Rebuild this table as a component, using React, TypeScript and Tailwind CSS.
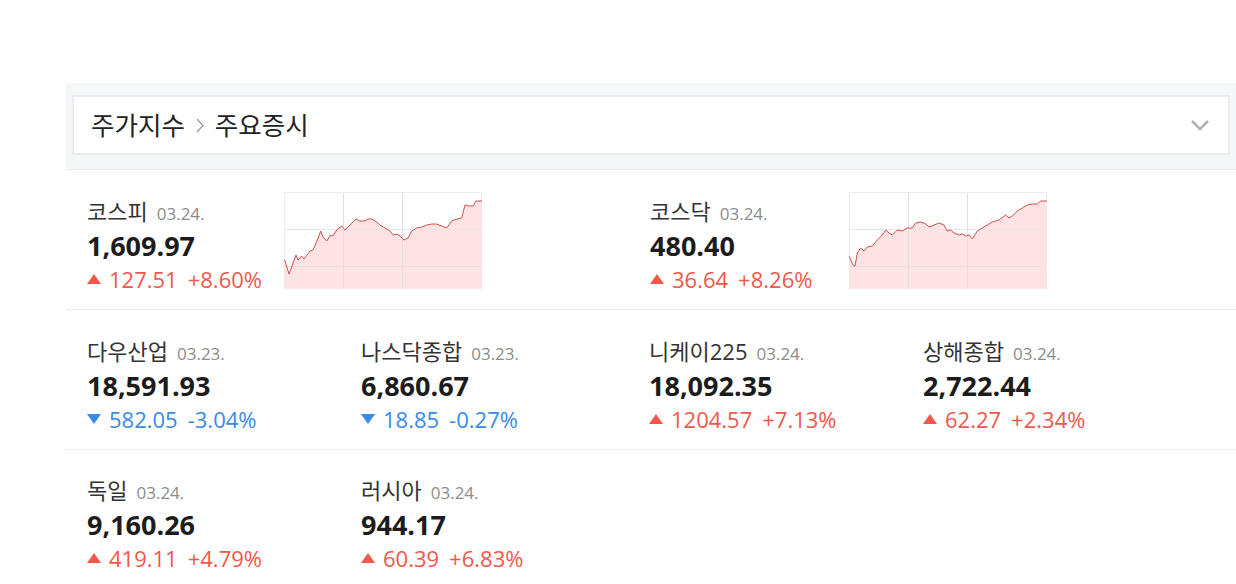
import React from "react";

type Market = {
  name: string;
  date: string;
  value: string;
  change: string;
  rate: string;
  up: boolean;
};

const kospiLine: [number, number][] = [
  [0, 68], [1, 69], [5, 82], [8, 74], [12, 63], [14, 68], [17.7, 64], [20, 67], [23, 63], [26, 59],
  [29, 58], [33, 49], [36.7, 39], [39, 45], [42.7, 49], [46.7, 43], [49, 44], [52.7, 38], [55, 36],
  [57.7, 34], [61, 38], [66, 33], [69, 30], [72, 27], [76, 29], [81, 29], [84, 27], [87.7, 27],
  [92.7, 30], [96, 33], [101, 36], [106, 39], [109, 43], [112.7, 42], [116, 44], [120, 48],
  [124, 46], [127.7, 39], [132.7, 36], [137.7, 35], [142.7, 33], [147.7, 32], [152.7, 32],
  [157.7, 34], [162.7, 36], [167.7, 29], [172.7, 27], [177.7, 26], [181, 13], [184, 14],
  [189, 14], [192, 9], [198, 9],
];

const kosdaqLine: [number, number][] = [
  [0, 64], [4, 73], [6, 74], [8.3, 61], [11.7, 56], [15, 59], [18.3, 55], [23.3, 54], [28.3, 48],
  [33.3, 43], [36.7, 38], [40, 41], [43.3, 43], [48.3, 38], [53.3, 39], [58.3, 36], [63.3, 36],
  [66.7, 31], [71.7, 30], [76.7, 32], [80, 35], [85, 33], [90, 31], [95, 33], [98.3, 39],
  [101.7, 38], [105, 41], [110, 43], [113.3, 42], [116.7, 44], [120, 43], [123.3, 47],
  [128.3, 39], [133.3, 36], [138.3, 33], [143.3, 30], [146.7, 29], [150, 28], [156.7, 23],
  [160, 26], [163.3, 24], [168.3, 19], [173.3, 16], [178.3, 13], [183.3, 12], [188.3, 12],
  [191.7, 9], [198, 9],
];

const row2: Market[] = [
  { name: "다우산업", date: "03.23.", value: "18,591.93", change: "582.05", rate: "-3.04%", up: false },
  { name: "나스닥종합", date: "03.23.", value: "6,860.67", change: "18.85", rate: "-0.27%", up: false },
  { name: "니케이225", date: "03.24.", value: "18,092.35", change: "1204.57", rate: "+7.13%", up: true },
  { name: "상해종합", date: "03.24.", value: "2,722.44", change: "62.27", rate: "+2.34%", up: true },
];

const row3: Market[] = [
  { name: "독일", date: "03.24.", value: "9,160.26", change: "419.11", rate: "+4.79%", up: true },
  { name: "러시아", date: "03.24.", value: "944.17", change: "60.39", rate: "+6.83%", up: true },
];

const font = "font-['Open_Sans','Noto_Sans_CJK_KR',sans-serif]";

const MiniChart = ({ points }: { points: [number, number][] }) => {
  const line = points.map(([x, y], i) => `${i ? "L" : "M"}${x} ${y}`).join(" ");
  const area = `${line} L198 97 L0 97 Z`;
  return (
    <svg width={198} height={97} viewBox="0 0 198 97" className="block">
      <rect x={0.5} y={0.5} width={197} height={96} fill="#fff" stroke="#ececec" />
      <path d={area} fill="#fde3e3" />
      <line x1={59.5} y1={1} x2={59.5} y2={97} stroke="#e6dede" />
      <line x1={118.5} y1={1} x2={118.5} y2={97} stroke="#e6dede" />
      <line x1={1} y1={37.5} x2={197} y2={37.5} stroke="#eee4e4" />
      <line x1={1} y1={74.5} x2={197} y2={74.5} stroke="#f3dada" />
      <path d={line} fill="none" stroke="#d0504c" strokeWidth={1} strokeLinejoin="round" />
    </svg>
  );
};

const Quote = ({ m }: { m: Market }) => {
  const color = m.up ? "text-[#f2574b]" : "text-[#3a8ae8]";
  return (
    <div className="flex flex-col">
      <div className="flex items-baseline h-[24px] leading-[24px]">
        <span className="text-[22px] text-[#333]">{m.name}</span>
        <span className="ml-[9px] text-[17px] text-[#8c8c8c]">{m.date}</span>
      </div>
      <div className="mt-[6px] h-[34px] leading-[34px] text-[27px] font-bold text-[#1c1c1c]">
        {m.value}
      </div>
      <div className={`mt-[1px] flex items-center h-[30px] text-[22px] ${color}`}>
        <svg width={14} height={10} viewBox="0 0 14 10" className="mr-[8px]">
          {m.up ? <path d="M7 0 L14 10 L0 10 Z" fill="currentColor" /> : <path d="M0 0 L14 0 L7 10 Z" fill="currentColor" />}
        </svg>
        <span>{m.change}</span>
        <span className="ml-[10px]">{m.rate}</span>
      </div>
    </div>
  );
};

export default function App() {
  return (
    <div className={`w-[1236px] h-[584px] overflow-hidden bg-white ${font}`}>
      <div className="ml-[66px] mt-[83px] w-[1170px]">
        <div className="bg-[#f6f7f9] px-[6px] pt-[12px] pb-[14px] border-b border-[#e9eaec]">
          <div className="h-[60px] bg-white border-2 border-[#eaecef] flex items-center justify-between pl-[17px] pr-[18px]">
            <div className="flex items-center text-[25.5px] text-[#222]">
              <span>주가지수</span>
              <svg width={8} height={15} viewBox="0 0 8 15" className="ml-[11px] mr-[11px]">
                <path d="M1 1 L7 7.5 L1 14" fill="none" stroke="#9a9a9a" strokeWidth={1.3} />
              </svg>
              <span>주요증시</span>
            </div>
            <svg width={20} height={12} viewBox="0 0 20 12">
              <path d="M2 2 L10 10 L18 2" fill="none" stroke="#b3b3b3" strokeWidth={2.6} />
            </svg>
          </div>
        </div>

        <div className="h-[140px] border-b border-[#ececec] pl-[21px] pt-[22px] flex">
          <div className="w-[563px] flex">
            <div className="w-[197px] pt-[7px]">
              <Quote m={{ name: "코스피", date: "03.24.", value: "1,609.97", change: "127.51", rate: "+8.60%", up: true }} />
            </div>
            <MiniChart points={kospiLine} />
          </div>
          <div className="w-[563px] flex">
            <div className="w-[199px] pt-[7px]">
              <Quote m={{ name: "코스닥", date: "03.24.", value: "480.40", change: "36.64", rate: "+8.26%", up: true }} />
            </div>
            <MiniChart points={kosdaqLine} />
          </div>
        </div>

        <div className="h-[140px] border-b border-[#ececec] pl-[21px] pt-[29px] grid grid-cols-[274px_288px_274px_274px]">
          {row2.map((m) => (
            <Quote key={m.name} m={m} />
          ))}
        </div>

        <div className="h-[140px] pl-[21px] pt-[28px] grid grid-cols-[274px_288px_274px_274px]">
          {row3.map((m) => (
            <Quote key={m.name} m={m} />
          ))}
        </div>
      </div>
    </div>
  );
}
